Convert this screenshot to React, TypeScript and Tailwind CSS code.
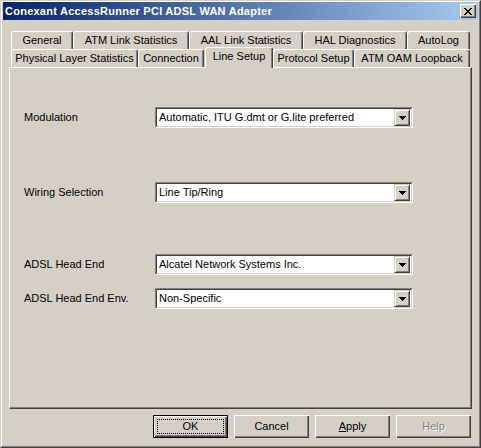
import React from "react";

const FONT = "font-['Liberation_Sans',Arial,sans-serif]";

const CLOSE_GLYPH = [
  "xx....xx",
  ".xx..xx.",
  "..xxxx..",
  "...xx...",
  "..xxxx..",
  ".xx..xx.",
  "xx....xx",
];

const CloseGlyph = () => (
  <svg width="8" height="7" viewBox="0 0 8 7" shapeRendering="crispEdges">
    {CLOSE_GLYPH.flatMap((row, y) =>
      row.split("").map((c, x) =>
        c === "x" ? <rect key={`${x}-${y}`} x={x} y={y} width="1" height="1" fill="#000" /> : null
      )
    )}
  </svg>
);

const DownArrow = () => (
  <svg width="7" height="4" viewBox="0 0 7 4" shapeRendering="crispEdges">
    <rect x="0" y="0" width="7" height="1" fill="#000" />
    <rect x="1" y="1" width="5" height="1" fill="#000" />
    <rect x="2" y="2" width="3" height="1" fill="#000" />
    <rect x="3" y="3" width="1" height="1" fill="#000" />
  </svg>
);

type TabProps = { label: string; width: string; selected?: boolean; className?: string };

const Tab = ({ label, width, selected, className = "" }: TabProps) => (
  <div
    className={`${width} ${className} flex shrink-0 items-center justify-center rounded-t-[3px] border-l border-t border-r border-l-white border-t-white border-r-[#404040] bg-[#d4d0c8] shadow-[inset_-1px_0_0_#808080] text-[11px] text-black whitespace-nowrap ${
      selected ? "relative z-10 -mt-[2px] h-[21px] pb-[3px]" : "h-[18px]"
    }`}
  >
    {label}
  </div>
);

const Combo = ({ value }: { value: string }) => (
  <div className="flex h-[21px] w-[258px] border-t border-l border-b border-r border-t-[#808080] border-l-[#808080] border-b-white border-r-white">
    <div className="flex flex-1 items-center border-t border-l border-b border-r border-t-[#404040] border-l-[#404040] border-b-[#d4d0c8] border-r-[#d4d0c8] bg-white pr-px">
      <span className="flex-1 pl-[2px] text-[11px] text-black whitespace-nowrap">{value}</span>
      <div className="flex h-[17px] w-[16px] items-center justify-center border-t border-l border-b border-r border-t-[#d4d0c8] border-l-[#d4d0c8] border-b-[#404040] border-r-[#404040] bg-[#d4d0c8] shadow-[inset_1px_1px_0_#fff,inset_-1px_-1px_0_#808080]">
        <DownArrow />
      </div>
    </div>
  </div>
);

const Row = ({ label, value, className = "" }: { label: string; value: string; className?: string }) => (
  <div className={`flex items-center ${className}`}>
    <span className="w-[131px] text-[11px] text-black">{label}</span>
    <Combo value={value} />
  </div>
);

const Button = ({
  children,
  isDefault,
  disabled,
}: {
  children: React.ReactNode;
  isDefault?: boolean;
  disabled?: boolean;
}) => (
  <button
    type="button"
    className={`relative flex h-[23px] w-[75px] items-center justify-center bg-[#d4d0c8] text-[11px] ${
      isDefault
        ? "border border-black shadow-[inset_1px_1px_0_#fff,inset_-1px_-1px_0_#404040,inset_-2px_-2px_0_#808080]"
        : "shadow-[inset_1px_1px_0_#fff,inset_-1px_-1px_0_#404040,inset_-2px_-2px_0_#808080]"
    } ${disabled ? "text-[#808080] [text-shadow:1px_1px_0_#fff]" : "text-black"}`}
  >
    {children}
    {isDefault && <span className="absolute inset-[3px] border border-dotted border-black" />}
  </button>
);

export default function App() {
  return (
    <div className={`${FONT} h-[448px] w-[481px] border border-t-[#d4d0c8] border-l-[#d4d0c8] border-r-[#404040] border-b-[#404040] bg-[#d4d0c8]`}>
      <div className="flex h-full flex-col border border-t-white border-l-white border-r-[#808080] border-b-[#808080] px-px pb-px">
        {/* title bar */}
        <div className="flex h-[18px] shrink-0 items-center justify-between bg-linear-to-r/srgb from-[#0a246a] to-[#a6caf0] pl-[2px] pr-[2px]">
          <span className="text-[11px] font-bold tracking-[0.25px] text-white whitespace-nowrap">
            Conexant AccessRunner PCI ADSL WAN Adapter
          </span>
          <div className="flex h-[14px] w-[16px] items-center justify-center bg-[#d4d0c8] shadow-[inset_1px_1px_0_#fff,inset_-1px_-1px_0_#404040,inset_-2px_-2px_0_#808080]">
            <CloseGlyph />
          </div>
        </div>

        <div className="flex flex-1 flex-col px-[6px] pt-[11px]">
          {/* tab rows */}
          <div className="flex h-[18px] pl-[2px]">
            <Tab label="General" width="w-[62px]" />
            <Tab label="ATM Link Statistics" width="w-[116px]" />
            <Tab label="AAL Link Statistics" width="w-[114px]" />
            <Tab label="HAL Diagnostics" width="w-[104px]" />
            <Tab label="AutoLog" width="w-[63px]" />
          </div>
          <div className="flex h-[18px] items-start pl-[2px]">
            <Tab label="Physical Layer Statistics" width="w-[127px]" />
            <Tab label="Connection" width="w-[66px]" />
            <Tab label="Line Setup" width="w-[68px]" className="ml-px" selected />
            <Tab label="Protocol Setup" width="w-[81px]" />
            <Tab label="ATM OAM Loopback" width="w-[116px]" />
          </div>

          {/* page */}
          <div className="flex h-[342px] flex-col border border-t-white border-l-white border-r-[#404040] border-b-[#404040] pl-[14px] pt-[39px] shadow-[inset_-1px_-1px_0_#808080]">
            <Row label="Modulation" value="Automatic, ITU G.dmt or G.lite preferred" />
            <Row label="Wiring Selection" value="Line Tip/Ring" className="mt-[54px]" />
            <Row label="ADSL Head End" value="Alcatel Network Systems Inc." className="mt-[51px]" />
            <Row label="ADSL Head End Env." value="Non-Specific" className="mt-[13px]" />
          </div>

          {/* buttons */}
          <div className="mt-[6px] flex justify-end gap-[6px] pr-px">
            <Button isDefault>OK</Button>
            <Button>Cancel</Button>
            <Button>
              <span>
                <span className="underline">A</span>pply
              </span>
            </Button>
            <Button disabled>Help</Button>
          </div>
        </div>
      </div>
    </div>
  );
}
